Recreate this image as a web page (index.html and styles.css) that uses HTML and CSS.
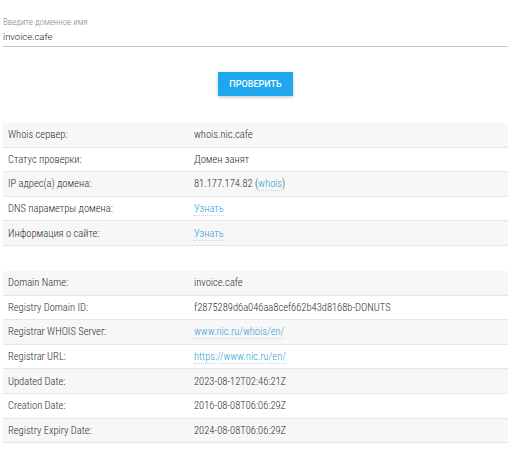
FILE: index.html
```html
<!DOCTYPE html>
<html lang="ru">
<head>
    <meta charset="UTF-8">
    <title>Whois</title>
    <link rel="stylesheet" href="styles.css">
</head>
<body>
    <div class="page">
        <div class="field">
            <label for="domain">Введите доменное имя</label>
            <input type="text" id="domain" value="invoice.cafe">
        </div>

        <div class="actions">
            <button class="btn">Проверить</button>
        </div>

        <table class="info">
            <tr><td>Whois сервер:</td><td>whois.nic.cafe</td></tr>
            <tr><td>Статус проверки:</td><td>Домен занят</td></tr>
            <tr><td>IP адрес(а) домена:</td><td>81.177.174.82 (<a href="#">whois</a>)</td></tr>
            <tr><td>DNS параметры домена:</td><td><a href="#">Узнать</a></td></tr>
            <tr><td>Информация о сайте:</td><td><a href="#">Узнать</a></td></tr>
        </table>

        <table class="info">
            <tr><td>Domain Name:</td><td>invoice.cafe</td></tr>
            <tr><td>Registry Domain ID:</td><td>f2875289d6a046aa8cef662b43d8168b-DONUTS</td></tr>
            <tr><td>Registrar WHOIS Server:</td><td><a href="#">www.nic.ru/whois/en/</a></td></tr>
            <tr><td>Registrar URL:</td><td><a href="#">https://www.nic.ru/en/</a></td></tr>
            <tr><td>Updated Date:</td><td>2023-08-12T02:46:21Z</td></tr>
            <tr><td>Creation Date:</td><td>2016-08-08T06:06:29Z</td></tr>
            <tr><td>Registry Expiry Date:</td><td>2024-08-08T06:06:29Z</td></tr>
        </table>
    </div>
</body>
</html>
```

FILE: styles.css
```css
body {
    margin: 0;
    font-family: Roboto, sans-serif;
    font-stretch: 75%;
    font-weight: 300;
    color: #2b2b2b;
    background-color: #fff;
}
.page {
    padding: 16px 4px 0 3px;
}
.field {
    display: flex;
    flex-direction: column;
    border-bottom: 1px solid #c8c8c8;
    padding-bottom: 2px;
}
.field label {
    font-size: 9px;
    color: #888;
    line-height: 12px;
}
.field input {
    border: none;
    outline: none;
    padding: 0;
    margin-top: 2px;
    font-family: inherit;
    font-weight: 300;
    font-size: 9.5px;
    line-height: 14px;
    height: 14px;
    color: #222;
}
.actions {
    display: flex;
    justify-content: center;
    padding: 25px 0 27px 0;
}
.btn {
    background-color: #1ea7ec;
    color: #fff;
    border: none;
    width: 75px;
    height: 24px;
    font-family: inherit;
    font-weight: 500;
    font-size: 9px;
    text-transform: uppercase;
    box-shadow: 0 1px 3px rgba(0, 0, 0, 0.25);
    cursor: pointer;
}
.info {
    width: 100%;
    border-collapse: collapse;
    font-size: 10.5px;
    margin-bottom: 25px;
}
.info tr:nth-child(odd) {
    background-color: #f7f7f7;
}
.info td {
    height: 23.6px;
    padding: 0 5px;
    border-bottom: 1px solid #e6e6e6;
}
.info td:first-child {
    width: 176px;
}
.info a {
    color: #2a9fd6;
    text-decoration: none;
    border-bottom: 1px dotted #b8dcee;
}
```
